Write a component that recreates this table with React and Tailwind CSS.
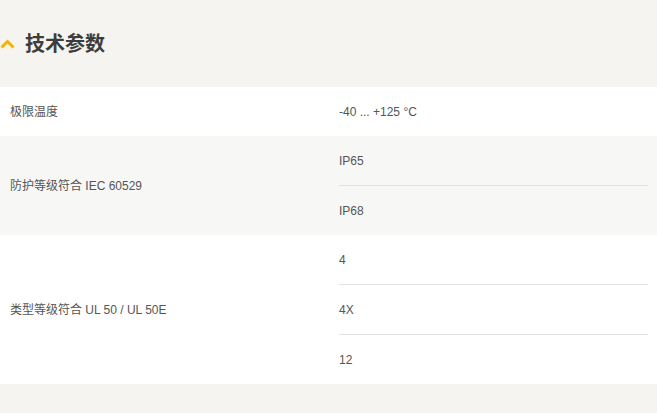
import React from 'react'

const rows = [
  { label: '极限温度', values: ['-40 ... +125 °C'], bg: 'bg-white' },
  { label: '防护等级符合 IEC 60529', values: ['IP65', 'IP68'], bg: 'bg-[#f7f7f5]' },
  { label: '类型等级符合 UL 50 / UL 50E', values: ['4', '4X', '12'], bg: 'bg-white' },
]

function App() {
  return (
    <div className='w-[657px] h-[413px] bg-[#f5f4f0] text-[#555] font-["Liberation_Sans","Noto_Sans_CJK_SC",sans-serif] overflow-hidden'>
      <div className='h-[87px] flex items-center gap-[10px]'>
        <svg width='15' height='10' viewBox='0 0 15 10' className='mt-[1px]'>
          <path d='M1.5 8.5 L7.5 2.5 L13.5 8.5' fill='none' stroke='#f4b400' strokeWidth='3' />
        </svg>
        <h2 className='text-[20px] font-bold text-[#3d3d3d] leading-none'>技术参数</h2>
      </div>
      <div>
        {rows.map((row) => (
          <div key={row.label} className={'flex ' + row.bg}>
            <div className='w-[339px] pl-[10px] flex items-center text-[12px]'>{row.label}</div>
            <div className='flex-1 pr-[9px]'>
              {row.values.map((v, i) => (
                <div key={v} className={'h-[49px] flex items-center text-[12px] ' + (i > 0 ? 'border-t border-[#e1e1e1] box-content' : '')}>{v}</div>
              ))}
            </div>
          </div>
        ))}
      </div>
    </div>
  )
}

export default App
